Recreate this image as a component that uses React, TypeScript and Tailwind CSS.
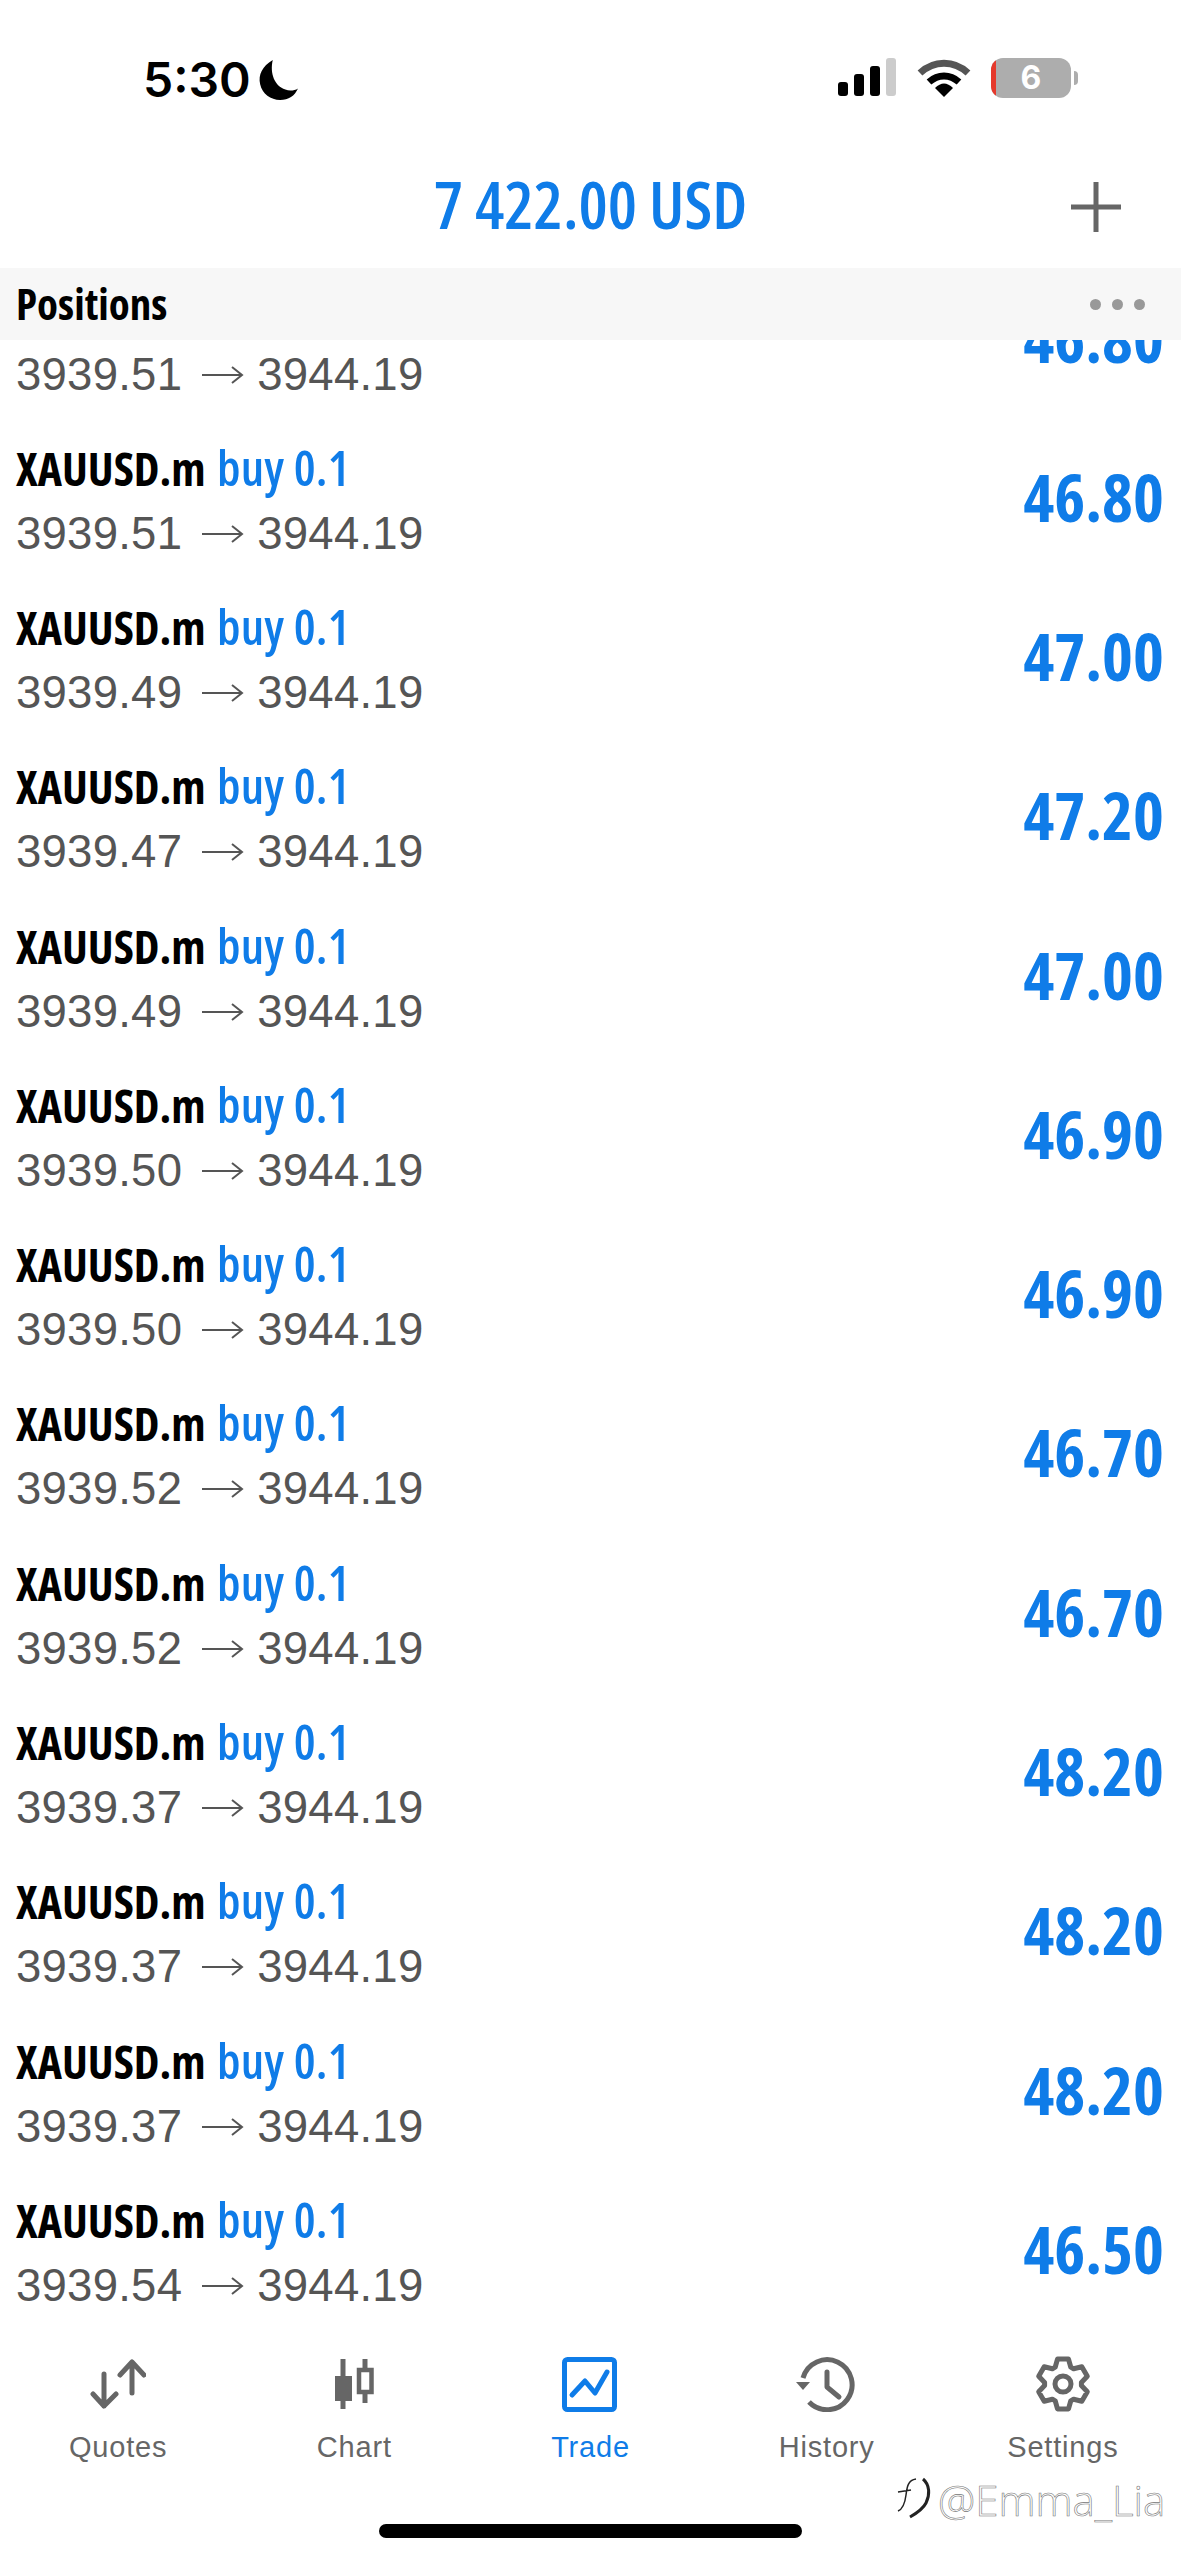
const positions = [
  ["3939.51", "46.80"],
  ["3939.51", "46.80"],
  ["3939.49", "47.00"],
  ["3939.47", "47.20"],
  ["3939.49", "47.00"],
  ["3939.50", "46.90"],
  ["3939.50", "46.90"],
  ["3939.52", "46.70"],
  ["3939.52", "46.70"],
  ["3939.37", "48.20"],
  ["3939.37", "48.20"],
  ["3939.37", "48.20"],
  ["3939.54", "46.50"],
];

function QuotesIcon() {
  return (
    <svg width="56" height="56" viewBox="0 0 56 56" fill="none" stroke="#666" strokeWidth="5" strokeLinecap="round" strokeLinejoin="round">
      <path d="M14 18v32M3 38l11 12 12-12" />
      <path d="M42 6v31M30 19L42 6l12 13" />
    </svg>
  );
}

function ChartIcon() {
  return (
    <svg width="56" height="56" viewBox="0 0 56 56" fill="none" stroke="#666">
      <path d="M17 3v50" strokeWidth="5" />
      <rect x="9" y="20" width="17" height="25" fill="#666" stroke="none" />
      <path d="M39 3v44" strokeWidth="5" />
      <rect x="33" y="14" width="12.5" height="22" fill="#fff" strokeWidth="4.5" />
    </svg>
  );
}

function TradeIcon() {
  return (
    <svg width="56" height="56" viewBox="0 0 56 56" fill="none" stroke="#0f7ce8">
      <rect x="2.5" y="3.5" width="50" height="50" rx="3" strokeWidth="5" />
      <path d="M10 39l13-14 10 12 12-21" strokeWidth="5" strokeLinecap="round" strokeLinejoin="round" />
    </svg>
  );
}

function HistoryIcon() {
  return (
    <svg width="62" height="56" viewBox="0 0 62 56" fill="none" stroke="#666" strokeWidth="5">
      <path d="M13 46A25 25 0 1 0 7 22" />
      <path d="M0 26h14l-7 8z" fill="#666" stroke="none" />
      <path d="M31 16v15l12 10" strokeLinejoin="round" strokeLinecap="round" />
    </svg>
  );
}

// six-toothed cog outline around the centre of a 56 box
const cogPath =
  [0, 60, 120, 180, 240, 300]
    .flatMap((a) =>
      [
        [-25, 18.5],
        [-12.5, 25.5],
        [12.5, 25.5],
        [25, 18.5],
      ].map(([d, r]) => {
        const rad = ((a + d - 90) * Math.PI) / 180;
        return `${(28 + r * Math.cos(rad)).toFixed(1)} ${(28 + r * Math.sin(rad)).toFixed(1)}`;
      })
    )
    .map((p, i) => (i === 0 ? `M${p}` : `L${p}`))
    .join(" ") + " Z";

function SettingsIcon() {
  return (
    <svg width="56" height="56" viewBox="0 0 56 56" fill="none" stroke="#666" strokeWidth="5" strokeLinejoin="round">
      <path d={cogPath} />
      <circle cx="28" cy="28" r="8" />
    </svg>
  );
}

const tabs = [
  { label: "Quotes", icon: <QuotesIcon /> },
  { label: "Chart", icon: <ChartIcon /> },
  { label: "Trade", icon: <TradeIcon />, active: true },
  { label: "History", icon: <HistoryIcon /> },
  { label: "Settings", icon: <SettingsIcon /> },
];

function StatusBar() {
  return (
    <div className="h-[140px] flex items-start justify-between pl-[143px] pr-[103px] pt-[56px]">
      <div className="flex items-center gap-[6px]">
        <span className="font-['Inter'] font-semibold text-[48px] leading-[48px] text-black">5:30</span>
        <svg width="42" height="42" viewBox="0 0 40 40">
          <path d="M15 1C5 7 1 15 3 24c2 9 10 15 19 15 8 0 14-4 17-11-3 2-8 3-12 1-10-3-15-15-12-28z" fill="#000" />
        </svg>
      </div>
      <div className="flex items-center gap-[20px] pt-[2px]">
        <svg width="60" height="40" viewBox="0 0 60 40">
          <rect x="1" y="24" width="10" height="14" rx="3" fill="#000" />
          <rect x="17" y="16" width="10" height="22" rx="3" fill="#000" />
          <rect x="33" y="8" width="10" height="30" rx="3" fill="#000" />
          <rect x="49" y="0" width="10" height="38" rx="3" fill="#ccc" />
        </svg>
        <svg width="54" height="40" viewBox="0 0 54 40" fill="none">
          <path d="M3 15C17 2 37 2 51 15" stroke="#555" strokeWidth="7" />
          <path d="M12 24c9-8 21-8 30 0" stroke="#000" strokeWidth="7" />
          <path d="M18 30c6-6 12-6 18 0l-9 9z" fill="#000" />
        </svg>
        <div className="flex items-center gap-[3px]">
          <div className="relative w-[80px] h-[40px] rounded-[12px] bg-[#adadad] overflow-hidden flex items-center justify-center">
            <div className="absolute left-0 top-0 h-full w-[5px] bg-[#e5392c]" />
            <span className="font-['Inter'] font-bold text-[32px] leading-none text-white">6</span>
          </div>
          <div className="w-[4px] h-[14px] rounded-r-full bg-[#adadad]" />
        </div>
      </div>
    </div>
  );
}

export default function App() {
  return (
    <div className="w-[1181px] h-[2560px] bg-white flex flex-col overflow-hidden font-['Liberation_Sans',sans-serif]">
      <StatusBar />

      <div className="h-[128px] relative flex items-center justify-center">
        <span className="font-['Open_Sans'] [font-stretch:75%] font-semibold text-[65.5px] leading-none text-[#0f7ce8] -mt-[1px]">
          7 422.00 USD
        </span>
        <svg className="absolute left-[1071px] top-[42px]" width="50" height="50" viewBox="0 0 50 50" stroke="#666" strokeWidth="5">
          <path d="M25 0v50M0 25h50" />
        </svg>
      </div>

      <div className="h-[72px] bg-[#f7f7f7] flex items-center justify-between pl-[16px] pr-[36px] relative z-10">
        <span className="font-['Open_Sans'] [font-stretch:75%] font-bold text-[43px] leading-none text-black -mt-[2px]">Positions</span>
        <div className="flex gap-[11px]">
          <div className="w-[11px] h-[11px] rounded-full bg-[#999]" />
          <div className="w-[11px] h-[11px] rounded-full bg-[#999]" />
          <div className="w-[11px] h-[11px] rounded-full bg-[#999]" />
        </div>
      </div>

      <div className="flex-1 overflow-hidden">
        <div className="-mt-[81px]">
          {positions.map(([open, profit], i) => (
            <div key={i} className="h-[159.27px] flex items-center justify-between pl-[16px] pr-[17px]">
              <div className="flex flex-col pt-[3px]">
                <div className="text-[46px] leading-[62px] font-['Open_Sans'] [font-stretch:75%] font-bold whitespace-nowrap -mt-[1px]">
                  <span className="text-black">XAUUSD.m</span>{" "}
                  <span className="text-[#0f7ce8] font-semibold text-[49px] ml-[3px] tracking-[0.3px]">buy 0.1</span>
                </div>
                <div className="flex items-center text-[45.5px] leading-[56px] tracking-[0.25px] text-[#555] whitespace-nowrap mt-[7px]">
                  <span>{open}</span>
                  <svg className="mx-[20px]" width="42" height="20" viewBox="0 0 42 20" fill="none" stroke="#555" strokeWidth="2">
                    <path d="M0 10h40M30 2l10 8-10 8" />
                  </svg>
                  <span className="-ml-[7px]">3944.19</span>
                </div>
              </div>
              <span className="font-['Open_Sans'] [font-stretch:75%] font-bold text-[66px] leading-none text-[#0f7ce8] -mt-[4px]">
                {profit}
              </span>
            </div>
          ))}
        </div>
      </div>

      <div className="h-[231px] relative bg-white">
        <div className="grid grid-cols-5 pt-[27px]">
          {tabs.map((t) => (
            <div key={t.label} className="flex flex-col items-center">
              <div className="h-[56px] flex items-center">{t.icon}</div>
              <span className={`text-[29px] leading-[32px] mt-[19px] tracking-[0.8px] ${t.active ? "text-[#0f7ce8]" : "text-[#666]"}`}>
                {t.label}
              </span>
            </div>
          ))}
        </div>
        <div className="absolute left-[896px] top-[148px] flex items-start gap-[6px]">
          <svg width="36" height="42" viewBox="0 0 36 42" fill="none" stroke="#222">
            <path d="M20 2C12 3 11 10 10 18 9 26 7 32 2 34M2 15l13-2" strokeWidth="1.5" />
            <path d="M27 2c7 6 7 16 3 24-3 6-9 10-16 14" strokeWidth="3" />
          </svg>
          <span className="text-[42px] leading-[46px] font-['Open_Sans'] font-light text-white [-webkit-text-stroke:0.6px_#777]">
            @Emma_Lia
          </span>
        </div>
        <div className="absolute left-[379px] top-[195px] w-[423px] h-[14px] rounded-full bg-black" />
      </div>
    </div>
  );
}
